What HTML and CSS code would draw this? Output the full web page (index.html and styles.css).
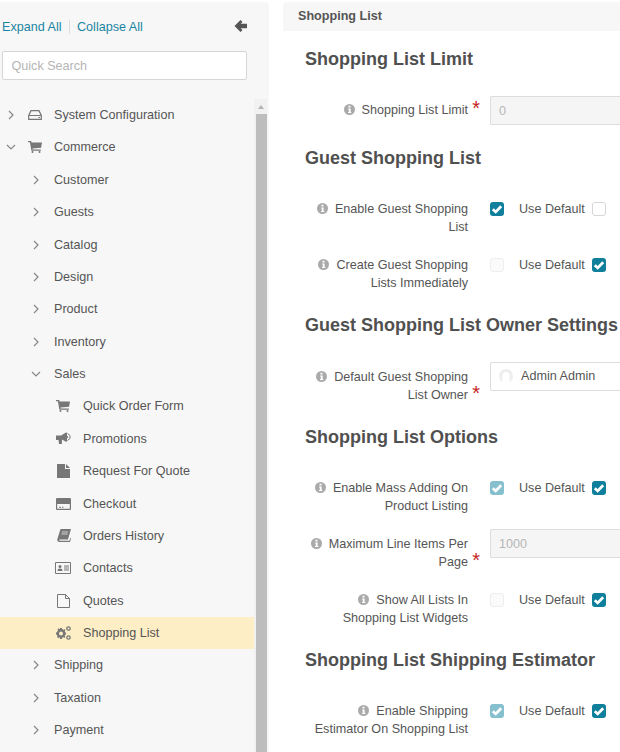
FILE: index.html
```html
<!DOCTYPE html>
<html lang="en">
<head>
    <meta charset="UTF-8">
    <title>Shopping List</title>
    <link rel="stylesheet" href="styles.css">
</head>
<body>

    <!-- Shared icons -->
    <svg class="sprite" xmlns="http://www.w3.org/2000/svg">
        <symbol id="i-right" viewBox="0 0 6 10"><path d="M1 1l4 4-4 4" fill="none" stroke="#888" stroke-width="1.2"/></symbol>
        <symbol id="i-down" viewBox="0 0 10 6"><path d="M1 1l4 4 4-4" fill="none" stroke="#888" stroke-width="1.2"/></symbol>
        <symbol id="i-cart" viewBox="0 0 14 12"><path d="M0 0h3.2l.4 1.5H14l-.9 5.2-8.6.9.2 1h8.1v1.2H3.400L1.900 1.200H0z" fill="#777"/><circle cx="4.500" cy="11" r="1" fill="#777"/><circle cx="11.500" cy="11" r="1" fill="#777"/></symbol>
        <symbol id="i-check" viewBox="0 0 14 14"><path d="M2.800 7.200l2.900 2.700L11.200 4.300" fill="none" stroke="#fff" stroke-width="2.800"/></symbol>
        <symbol id="i-info" viewBox=".5 .5 11 11"><circle cx="6" cy="6" r="5.500" fill="#aaa"/><path d="M5 2.300h2v1.700H5zM4.600 5h2.500v3.600h.7v1H4.500v-1h.8V6h-.7z" fill="#fff"/></symbol>
    </svg>

    <div class="page">

        <!-- Left tree -->
        <aside class="sidebar">
            <div class="sidebar-top">
                <div class="tree-links">
                    <a href="#">Expand All</a>
                    <a href="#">Collapse All</a>
                </div>
                <svg class="back-arrow" viewBox="0 0 13 12"><path d="M6.500 0l2 2-1.800 1.800H13v4.400H6.700L8.500 10l-2 2-6-6z" fill="#555"/></svg>
            </div>
            <input class="search" type="text" placeholder="Quick Search">

            <div class="tree-wrap">
                <ul class="tree">
                    <li class="row lvl0">
                        <svg class="arrow"><use href="#i-right"/></svg>
                        <span class="slot"><svg class="ico" viewBox="0 0 14 10"><path d="M3 .7h8l2.300 4.800v3.800H.7V5.500zM.7 5.500h12.600" fill="none" stroke="#777" stroke-width="1.200"/><path d="M10.500 7h1.500v1h-1.500z" fill="#777"/></svg></span>
                        System Configuration
                    </li>
                    <li class="row lvl0">
                        <svg class="arrow-down"><use href="#i-down"/></svg>
                        <span class="slot"><svg class="ico cart"><use href="#i-cart"/></svg></span>
                        Commerce
                    </li>
                    <li class="row lvl1"><svg class="arrow"><use href="#i-right"/></svg>Customer</li>
                    <li class="row lvl1"><svg class="arrow"><use href="#i-right"/></svg>Guests</li>
                    <li class="row lvl1"><svg class="arrow"><use href="#i-right"/></svg>Catalog</li>
                    <li class="row lvl1"><svg class="arrow"><use href="#i-right"/></svg>Design</li>
                    <li class="row lvl1"><svg class="arrow"><use href="#i-right"/></svg>Product</li>
                    <li class="row lvl1"><svg class="arrow"><use href="#i-right"/></svg>Inventory</li>
                    <li class="row lvl1"><svg class="arrow-down"><use href="#i-down"/></svg>Sales</li>
                    <li class="row lvl2">
                        <span class="slot"><svg class="ico cart"><use href="#i-cart"/></svg></span>
                        Quick Order Form
                    </li>
                    <li class="row lvl2">
                        <span class="slot"><svg class="ico horn" viewBox="0 0 15 13"><path d="M0 3.500h5L10 .5l1 .3v3l1.500 1.200L11 6.500v3l-1 .3-4-2.300-.2 4.500H3L2.500 8H0z" fill="#777"/><path d="M11.500 1.500l2.500 2v3l-2.500 2" fill="none" stroke="#777"/></svg></span>
                        Promotions
                    </li>
                    <li class="row lvl2">
                        <span class="slot"><svg class="ico file" viewBox="0 0 13 14"><path d="M0 0h8v5h5v9H0zM9 0l4 4H9z" fill="#777"/></svg></span>
                        Request For Quote
                    </li>
                    <li class="row lvl2">
                        <span class="slot"><svg class="ico wide" viewBox="0 0 15 12"><path d="M1 0h13a1 1 0 011 1v10a1 1 0 01-1 1H1a1 1 0 01-1-1V1a1 1 0 011-1zm.2 6v4.800h12.600V6zM3 8.800h2v1H3zm3 0h1.500v1H6z" fill="#777" fill-rule="evenodd"/></svg></span>
                        Checkout
                    </li>
                    <li class="row lvl2">
                        <span class="slot"><svg class="ico book" viewBox="0 0 14 13"><path d="M3.500 0H14l-3 10.500H2.800c-.8 0-.8 1.300 0 1.300H12.500l.8-2.800.7.500-1 3.500H2.500C.8 13 0 11.500.3 10.300z" fill="#777"/><path d="M5 3h6M4.500 5h6" stroke="#f7f7f7" stroke-width=".7"/></svg></span>
                        Orders History
                    </li>
                    <li class="row lvl2">
                        <span class="slot"><svg class="ico card" viewBox="0 0 16 12"><path d="M.5.500h15v11H.5z" fill="none" stroke="#777"/><circle cx="5" cy="4.600" r="1.500" fill="#777"/><path d="M2.500 9c0-1.800 1-2.500 2.500-2.500S7.500 7.200 7.500 9zM9 3.500h5v1H9zM9 5.500h5v1H9zM9 7.500h5v1H9z" fill="#777"/></svg></span>
                        Contacts
                    </li>
                    <li class="row lvl2">
                        <span class="slot"><svg class="ico file" viewBox="0 0 13 14"><path d="M.5.500h8l4 4v9H.5zM8.500.500v4h4" fill="none" stroke="#777"/></svg></span>
                        Quotes
                    </li>
                    <li class="row lvl2 current">
                        <span class="slot"><svg class="ico cogs" viewBox="0 0 15 14"><circle cx="5" cy="7.500" r="3.200" fill="none" stroke="#777" stroke-width="2.400"/><path d="M4 2h2v2H4zM4 11h2v2H4zM0 6.500h2v2H0zM8 6.500h2v2H8zM1.500 3.300l1.400-1 1 1.500-1.400 1zM7 10.500l1.400-1 1 1.500-1.400 1zM1 11l1.300 1.200 1.200-1.400L2.200 9.600zM7 4.500l1.300 1.200 1.200-1.400L8.200 3.100z" fill="#777"/><circle cx="12.500" cy="2.500" r="1.700" fill="none" stroke="#777" stroke-width="1.300"/><circle cx="12.500" cy="11.500" r="1.700" fill="none" stroke="#777" stroke-width="1.300"/></svg></span>
                        Shopping List
                    </li>
                    <li class="row lvl1"><svg class="arrow"><use href="#i-right"/></svg>Shipping</li>
                    <li class="row lvl1"><svg class="arrow"><use href="#i-right"/></svg>Taxation</li>
                    <li class="row lvl1"><svg class="arrow"><use href="#i-right"/></svg>Payment</li>
                </ul>

                <!-- Scrollbar -->
                <div class="scrollbar">
                    <div class="scroll-up"></div>
                    <div class="scroll-thumb"></div>
                </div>
            </div>
        </aside>

        <!-- Settings form -->
        <main class="content">
            <div class="page-title">Shopping List</div>

            <div class="form">
                <h2>Shopping List Limit</h2>
                <div class="field with-input single">
                    <label class="req"><svg class="info"><use href="#i-info"/></svg>Shopping List Limit</label>
                    <input class="text-input" type="text" value="0" disabled>
                </div>

                <h2>Guest Shopping List</h2>
                <div class="field">
                    <label><svg class="info"><use href="#i-info"/></svg>Enable Guest Shopping List</label>
                    <span class="cb on"><svg><use href="#i-check"/></svg></span>
                    <span class="use-default">Use Default</span>
                    <span class="cb"></span>
                </div>
                <div class="field">
                    <label><svg class="info"><use href="#i-info"/></svg>Create Guest Shopping Lists Immediately</label>
                    <span class="cb off"></span>
                    <span class="use-default">Use Default</span>
                    <span class="cb on"><svg><use href="#i-check"/></svg></span>
                </div>

                <h2>Guest Shopping List Owner Settings</h2>
                <div class="field with-input">
                    <label class="req"><svg class="info"><use href="#i-info"/></svg>Default Guest Shopping List Owner</label>
                    <div class="select-box">
                        <svg class="avatar" viewBox="0 0 14 14"><circle cx="7" cy="7" r="7" fill="#eee"/><path d="M3.500 14V7a3.500 4 0 017 0v7z" fill="#fff"/></svg>
                        Admin Admin
                    </div>
                </div>

                <h2>Shopping List Options</h2>
                <div class="field">
                    <label><svg class="info"><use href="#i-info"/></svg>Enable Mass Adding On Product Listing</label>
                    <span class="cb faded"><svg><use href="#i-check"/></svg></span>
                    <span class="use-default">Use Default</span>
                    <span class="cb on"><svg><use href="#i-check"/></svg></span>
                </div>
                <div class="field with-input">
                    <label class="req"><svg class="info"><use href="#i-info"/></svg>Maximum Line Items Per Page</label>
                    <input class="text-input" type="text" value="1000" disabled>
                </div>
                <div class="field">
                    <label><svg class="info"><use href="#i-info"/></svg>Show All Lists In Shopping List Widgets</label>
                    <span class="cb off"></span>
                    <span class="use-default">Use Default</span>
                    <span class="cb on"><svg><use href="#i-check"/></svg></span>
                </div>

                <h2>Shopping List Shipping Estimator</h2>
                <div class="field">
                    <label><svg class="info"><use href="#i-info"/></svg>Enable Shipping Estimator On Shopping List</label>
                    <span class="cb faded"><svg><use href="#i-check"/></svg></span>
                    <span class="use-default">Use Default</span>
                    <span class="cb on"><svg><use href="#i-check"/></svg></span>
                </div>
            </div>
        </main>
    </div>
</body>
</html>
```

FILE: styles.css
```css
/* General Reset */
* {
    margin: 0;
    padding: 0;
    box-sizing: border-box;
}

body {
    width: 620px;
    height: 752px;
    overflow: hidden;
    background-color: #ffffff;
    font-family: "Liberation Sans", Arial, sans-serif;
    font-size: 12.6px;
    color: #555555;
}

.sprite {
    display: none;
}

.page {
    display: flex;
    height: 752px;
    padding-top: 2px;
}

/* Sidebar */
.sidebar {
    flex: none;
    width: 269px;
    height: 750px;
    margin-right: 14px;
    background-color: #f7f7f7;
    border-top-right-radius: 4px;
    overflow: hidden;
}

.sidebar-top {
    display: flex;
    align-items: center;
    justify-content: space-between;
    width: 247px;
    height: 48px;
    padding: 1px 0 0 2px;
}

.tree-links a {
    color: #1a85a3;
    text-decoration: none;
}

.tree-links a + a {
    margin-left: 4px;
    padding-left: 7px;
    border-left: 1px solid #dddddd;
}

.back-arrow {
    width: 13px;
    height: 12px;
    margin-top: -1px;
}

.search {
    display: block;
    width: 245px;
    height: 29px;
    margin: 1px 0 0 2px;
    padding: 0 8.5px;
    border: 1px solid #d6d6d6;
    border-radius: 2px;
    background-color: #ffffff;
    font: 12.6px "Liberation Sans", Arial, sans-serif;
}

.search::placeholder {
    color: #b5b5b5;
    opacity: 1;
}

.tree-wrap {
    display: flex;
    margin-top: 18.88px;
}

.tree {
    flex: none;
    width: 254px;
    list-style: none;
}

.row {
    display: flex;
    align-items: center;
    height: 32.38px;
    white-space: nowrap;
}

.lvl0 {
    padding-left: 8px;
}

.lvl1 {
    padding-left: 33px;
}

.lvl2 {
    padding-left: 56px;
}

.current {
    background-color: #fdeec6;
}

.arrow {
    flex: none;
    width: 6px;
    height: 10px;
    margin-right: 15px;
}

.lvl0 .arrow {
    margin-right: 14px;
}

.lvl0 .arrow-down,
.lvl1 .arrow-down {
    flex: none;
    width: 10px;
    height: 6px;
    margin-left: -2px;
    margin-right: 12px;
}

.lvl1 .arrow-down {
    margin-right: 13px;
}

.slot {
    display: flex;
    align-items: center;
    flex: none;
    width: 26px;
}

.lvl2 .slot {
    width: 27px;
}

.ico {
    display: block;
    width: 14px;
    height: 10px;
}

.ico.cart {
    height: 12px;
}

.ico.file {
    width: 13px;
    height: 14px;
    margin-left: 1px;
}

.ico.wide {
    width: 15px;
    height: 12px;
}

.ico.horn {
    width: 15px;
    height: 13px;
}

.ico.book {
    width: 14px;
    height: 13px;
    margin-left: 1px;
}

.ico.card {
    width: 16px;
    height: 12px;
    margin-left: -1px;
}

.ico.cogs {
    width: 15px;
    height: 14px;
}

/* Fake scrollbar */
.scrollbar {
    flex: none;
    width: 13px;
    height: 660px;
    padding-left: 2px;
    background-color: #f1f1f1;
}

.scroll-up {
    width: 0;
    height: 0;
    margin: 6px 0 0 2px;
    border-left: 3.5px solid transparent;
    border-right: 3.5px solid transparent;
    border-bottom: 4px solid #b5b5b5;
}

.scroll-thumb {
    width: 11px;
    height: 650px;
    margin-top: 5px;
    background-color: #bdbdbd;
}

/* Main content */
.content {
    flex: 1;
    min-width: 0;
}

.page-title {
    height: 29px;
    padding-left: 15px;
    background-color: #f7f7f7;
    border-top-left-radius: 4px;
    font-size: 12.6px;
    font-weight: bold;
    line-height: 28px;
}

.form {
    padding-left: 22px;
}

h2 {
    height: 24px;
    margin-bottom: 30px;
    font-size: 18px;
    font-weight: bold;
    line-height: 24px;
    color: #505050;
    white-space: nowrap;
}

.form > h2:first-child {
    margin-top: 16px;
}

.field + h2 {
    margin-top: 21px;
}

/* One settings row */
.field {
    display: flex;
    align-items: flex-start;
    width: 315px;
    min-height: 36px;
    margin-bottom: 20px;
    line-height: 18px;
}

.field:last-child {
    margin-bottom: 0;
}

.field.with-input {
    margin-top: -6px;
}

h2 + .field.with-input {
    margin-top: -5px;
}

.field.single {
    min-height: 29px;
    margin-bottom: 0;
}

.field label {
    position: relative;
    flex: none;
    width: 163px;
    margin-right: 22px;
    text-align: right;
}

.with-input label {
    padding-top: 6px;
}

.single label {
    padding-top: 5px;
}

.req::after {
    content: "*";
    position: absolute;
    right: -12px;
    bottom: 2px;
    color: #c4261d;
    font-size: 20px;
    line-height: 18px;
}

.info {
    width: 11px;
    height: 11px;
    margin-right: 7px;
    vertical-align: -1px;
}

/* The inputs run off the right edge of the window */
.text-input {
    flex: none;
    width: 130px;
    height: 29px;
    padding: 0 8px;
    border: 1px solid #dddddd;
    border-right: none;
    border-radius: 2px 0 0 2px;
    background-color: #f5f5f5;
    font: 12.6px "Liberation Sans", Arial, sans-serif;
    color: #b5b5b5;
}

.select-box {
    display: flex;
    align-items: center;
    flex: none;
    width: 130px;
    height: 29px;
    padding: 0 0 1px 8px;
    border: 1px solid #dddddd;
    border-right: none;
    border-radius: 2px 0 0 2px;
    background-color: #ffffff;
}

.avatar {
    flex: none;
    width: 14px;
    height: 14px;
    margin-right: 8px;
}

/* Checkboxes */
.cb {
    flex: none;
    display: block;
    width: 14px;
    height: 14px;
    margin-top: 2px;
    border: 1px solid #d6d6d6;
    border-radius: 3px;
    background-color: #ffffff;
}

.cb svg {
    display: block;
    width: 14px;
    height: 14px;
}

.cb.on,
.cb.faded {
    border: none;
    background-color: #0f7f9c;
}

.cb.faded {
    background-color: #86c0cf;
}

.cb.off {
    border-color: #eeeeee;
    background-color: #fafafa;
}

.use-default {
    flex: none;
    margin: 0 7px 0 15px;
    white-space: nowrap;
}
```
